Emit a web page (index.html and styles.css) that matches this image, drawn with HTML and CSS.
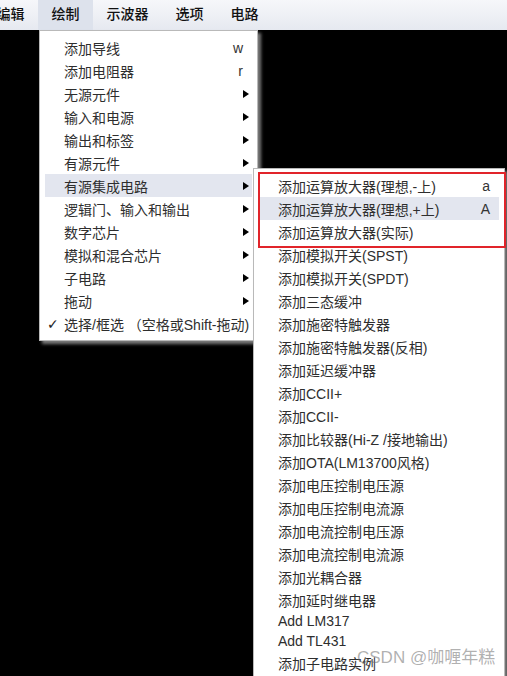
FILE: index.html
```html
<!DOCTYPE html>
<html lang="zh">
<head>
<meta charset="utf-8">
<title>菜单</title>
<link rel="stylesheet" href="styles.css">
</head>
<body>
<div class="menubar">
  <div class="mb-item first">编辑</div>
  <div class="mb-item active">绘制</div>
  <div class="mb-item">示波器</div>
  <div class="mb-item">选项</div>
  <div class="mb-item">电路</div>
</div>

<div class="menu main">
  <div class="row key-row"><span class="chk"></span><span class="label">添加导线</span><span class="key">w</span></div>
  <div class="row key-row"><span class="chk"></span><span class="label">添加电阻器</span><span class="key">r</span></div>
  <div class="row sub"><span class="chk"></span><span class="label">无源元件</span><span class="arrow"></span></div>
  <div class="row sub"><span class="chk"></span><span class="label">输入和电源</span><span class="arrow"></span></div>
  <div class="row sub"><span class="chk"></span><span class="label">输出和标签</span><span class="arrow"></span></div>
  <div class="row sub"><span class="chk"></span><span class="label">有源元件</span><span class="arrow"></span></div>
  <div class="row sub hover"><span class="chk"></span><span class="label">有源集成电路</span><span class="arrow"></span></div>
  <div class="row sub"><span class="chk"></span><span class="label">逻辑门、输入和输出</span><span class="arrow"></span></div>
  <div class="row sub"><span class="chk"></span><span class="label">数字芯片</span><span class="arrow"></span></div>
  <div class="row sub"><span class="chk"></span><span class="label">模拟和混合芯片</span><span class="arrow"></span></div>
  <div class="row sub"><span class="chk"></span><span class="label">子电路</span><span class="arrow"></span></div>
  <div class="row sub"><span class="chk"></span><span class="label">拖动</span><span class="arrow"></span></div>
  <div class="row"><span class="chk">✓</span><span class="label nowrap">选择/框选 （空格或Shift-拖动)</span></div>
</div>

<div class="menu submenu">
  <div class="row key-row"><span class="chk"></span><span class="label">添加运算放大器(理想,-上)</span><span class="key">a</span></div>
  <div class="row key-row hover"><span class="chk"></span><span class="label">添加运算放大器(理想,+上)</span><span class="key">A</span></div>
  <div class="row"><span class="chk"></span><span class="label">添加运算放大器(实际)</span></div>
  <div class="row"><span class="chk"></span><span class="label">添加模拟开关(SPST)</span></div>
  <div class="row"><span class="chk"></span><span class="label">添加模拟开关(SPDT)</span></div>
  <div class="row"><span class="chk"></span><span class="label">添加三态缓冲</span></div>
  <div class="row"><span class="chk"></span><span class="label">添加施密特触发器</span></div>
  <div class="row"><span class="chk"></span><span class="label">添加施密特触发器(反相)</span></div>
  <div class="row"><span class="chk"></span><span class="label">添加延迟缓冲器</span></div>
  <div class="row"><span class="chk"></span><span class="label">添加CCII+</span></div>
  <div class="row"><span class="chk"></span><span class="label">添加CCII-</span></div>
  <div class="row"><span class="chk"></span><span class="label">添加比较器(Hi-Z /接地输出)</span></div>
  <div class="row"><span class="chk"></span><span class="label">添加OTA(LM13700风格)</span></div>
  <div class="row"><span class="chk"></span><span class="label">添加电压控制电压源</span></div>
  <div class="row"><span class="chk"></span><span class="label">添加电压控制电流源</span></div>
  <div class="row"><span class="chk"></span><span class="label">添加电流控制电压源</span></div>
  <div class="row"><span class="chk"></span><span class="label">添加电流控制电流源</span></div>
  <div class="row"><span class="chk"></span><span class="label">添加光耦合器</span></div>
  <div class="row"><span class="chk"></span><span class="label">添加延时继电器</span></div>
  <div class="row latin"><span class="chk"></span><span class="label">Add LM317</span></div>
  <div class="row latin"><span class="chk"></span><span class="label">Add TL431</span></div>
  <div class="row"><span class="chk"></span><span class="label">添加子电路实例</span></div>
</div>

<div class="highlight-box"></div>
<div class="watermark">CSDN @咖喱年糕</div>
</body>
</html>
```

FILE: styles.css
```css
html, body {
  margin: 0;
  padding: 0;
}
body {
  background: #000;
  width: 507px;
  height: 676px;
  overflow: hidden;
  position: relative;
  font-family: "Liberation Sans", "Noto Sans CJK SC", sans-serif;
  font-size: 14px;
  color: #2e2e2e;
}
.menubar {
  height: 30px;
  display: flex;
  align-items: stretch;
  background: linear-gradient(#f6f7fa, #e6e9f0);
  overflow: hidden;
}
.mb-item {
  padding: 0 13.5px;
  line-height: 29px;
  color: #111;
  font-weight: 500;
  white-space: nowrap;
}
.mb-item.first {
  margin-left: -17px;
}
.mb-item.active {
  background: #dde2ec;
}
.menu {
  position: absolute;
  box-sizing: border-box;
  background: #fff;
  border: 1px solid #b9b9b9;
  padding: 5px;
  box-shadow: 3px 3px 3px #7a7a7a;
}
.menu.main {
  left: 39px;
  top: 30px;
  width: 219px;
}
.menu.submenu {
  left: 253px;
  top: 168px;
  width: 252px;
}
.row {
  height: 23px;
  display: flex;
  align-items: center;
  padding-right: 9px;
}
.row.sub {
  padding-right: 3px;
}
.row.latin {
  height: 20px;
}
.row.hover {
  background: #e3e6ef;
}
.chk {
  width: 17px;
  padding-left: 2px;
  flex: none;
  font-family: "DejaVu Sans", sans-serif;
  font-size: 14px;
  color: #222;
}
.label {
  flex: 1;
  white-space: nowrap;
}
.label.nowrap {
  overflow: visible;
}
.key {
  flex: none;
  color: #333;
}
.arrow {
  flex: none;
  width: 0;
  height: 0;
  border-left: 6px solid #000;
  border-top: 4.5px solid transparent;
  border-bottom: 4.5px solid transparent;
}
.highlight-box {
  position: absolute;
  left: 258px;
  top: 172px;
  width: 248px;
  height: 76px;
  box-sizing: border-box;
  border: 2px solid #e1242a;
}
.watermark {
  position: absolute;
  left: 357px;
  top: 647px;
  font-size: 17px;
  line-height: 22px;
  color: rgba(110, 110, 110, 0.55);
  white-space: nowrap;
}
```
